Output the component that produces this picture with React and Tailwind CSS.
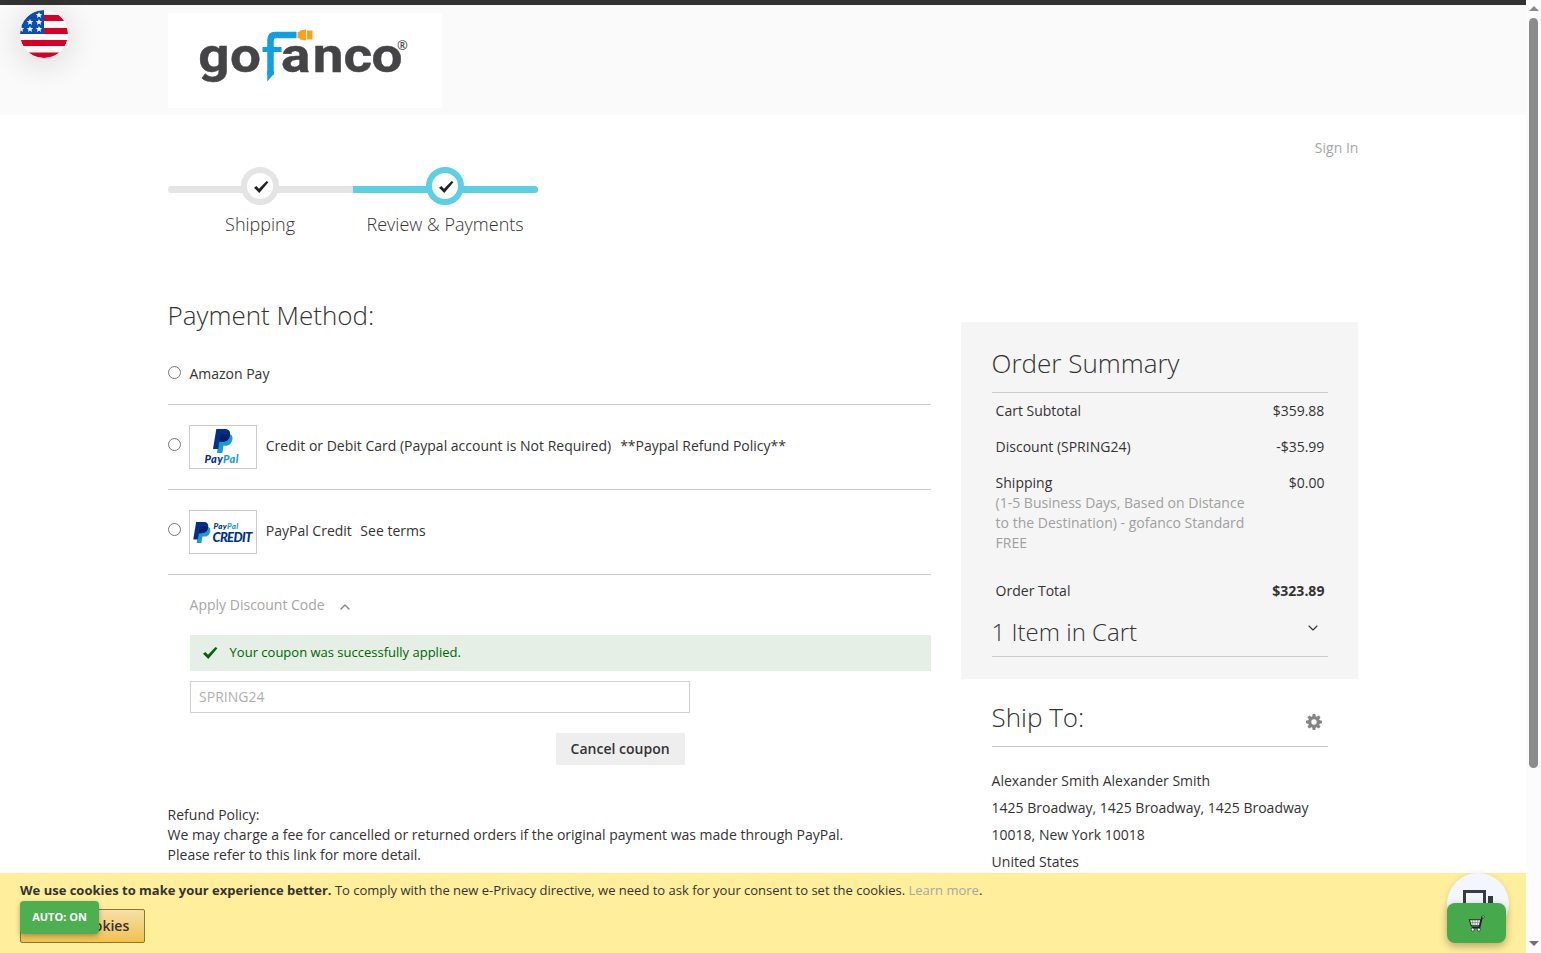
import { ChevronDown, ChevronUp } from "lucide-react";

const paymentRow = "flex border-b border-[#ccc]";

const totals = [
  { label: "Cart Subtotal", value: "$359.88" },
  { label: "Discount (SPRING24)", value: "-$35.99" },
];

const address = [
  "Alexander Smith Alexander Smith",
  "1425 Broadway, 1425 Broadway, 1425 Broadway",
  "10018, New York 10018",
  "United States",
];

function Flag() {
  return (
    <svg
      viewBox="0 0 48 48"
      className="absolute left-5 top-[10px] h-12 w-12 rounded-full shadow-[0_4px_28px_6px_rgba(0,0,0,0.1)]"
    >
      <defs>
        <clipPath id="round">
          <circle cx="24" cy="24" r="24" />
        </clipPath>
      </defs>
      <g clipPath="url(#round)">
        <rect width="48" height="48" fill="#fafafa" />
        <path
          d="M24 5h24v6H24zM24 18h24v6H24zM0 30h48v6H0zM0 42.500h48V48H0z"
          fill="#d80027"
        />
        <path d="M0 0h24v24H0z" fill="#0a4fb0" />
        <g fill="#fff">
          {[
            [19, 5],
            [10, 12],
            [19, 12],
            [10, 19],
            [19, 19],
            [1, 19],
          ].map(([x, y]) => (
            <path
              key={`${x}-${y}`}
              transform={`translate(${x} ${y})`}
              d="M0-3l.9 2.100 2.300.05-1.800 1.500.75 2.250L0 1.600l-2.150 1.300.75-2.250L-3.200-.85l2.300-.05z"
            />
          ))}
        </g>
      </g>
    </svg>
  );
}

function Logo() {
  return (
    <svg
      viewBox="0 0 274 95"
      className="ml-[168px] mt-2 h-[95px] w-[274px] bg-white"
    >
      <text
        transform="scale(1.12 1)"
        y="59"
        x="27 55.400 86 101 129.200 156.600 181.700"
        fill="#444446"
        stroke="#444446"
        strokeWidth=".4"
        className="font-['Roboto'] text-[49px] font-bold"
      >
        go
        <tspan fill="none" stroke="none">
          f
        </tspan>
        anco
      </text>
      {/* hose with the plug on its end */}
      <path
        d="M102.500 62V27q0-5 5-5h21"
        fill="none"
        stroke="#109fe0"
        strokeWidth="6.500"
      />
      <path d="M94.500 34h19v5h-19zM99.250 58h6.500v3l-6.500 7.500z" fill="#109fe0" />
      <path
        d="M129.500 19l2.500-.5v-1l6-1v11l-6-1v-1l-2.500-.5zM139 17.500h5.500v9H139z"
        fill="#f9a11b"
      />
      <text x="229" y="37" fill="#444446" className="font-['Open_Sans'] text-[13px] font-semibold">
        ®
      </text>
    </svg>
  );
}

function Check({ className }) {
  return (
    <svg viewBox="0 0 16 14" className={className}>
      <path
        d="M1 7.800L3.400 6 6 8.800 13.600 1 15.400 2.200 6.300 13z"
        fill="currentColor"
      />
    </svg>
  );
}

function PayPalMark({ className }) {
  return (
    <svg viewBox="0 0 20 24" className={className}>
      <path
        d="M6.500 5h9.500c3 .5 4 3 3.300 6-1 4.200-3.700 5.700-7.300 5.700h-1.500L9.300 24H4z"
        fill="#179bd7"
      />
      <path
        d="M3.300 0h8.500c4 0 6 2.300 5.200 6.300-.8 4.500-3.700 6.500-8 6.500H6.500L5.200 20H0z"
        fill="#003087"
      />
      <path
        d="M7.500 5h6.800q2 .2 2.700 1.300c-.8 4.500-3.700 6.500-8 6.500H6.500z"
        fill="#001f6b"
      />
    </svg>
  );
}

function Radio({ className = "" }) {
  return (
    <input
      type="radio"
      name="payment"
      className={`m-0 h-[13px] w-[13px] shrink-0 ${className}`}
    />
  );
}

function Step({ label, active, first }) {
  return (
    <li className="w-[185px] text-center">
      <div className="grid h-[38px] items-center">
        <div
          className={`col-start-1 row-start-1 mt-[6px] h-[7px] ${
            active ? "bg-[#5bcfe3]" : "bg-[#e4e4e4]"
          } ${first ? "rounded-l-md" : "rounded-r-md"}`}
        />
        <div
          className={`z-10 col-start-1 row-start-1 ml-[73px] flex h-[38px] w-[38px] items-center justify-center rounded-full border-[6px] bg-white ${
            active ? "border-[#5bcfe3]" : "border-[#e4e4e4]"
          }`}
        >
          <Check className="ml-[2px] mt-px h-[14px] w-[16px] shrink-0 text-[#222]" />
        </div>
      </div>
      <div className="mt-[7px] text-[18px] font-light leading-[25px]">
        {label}
      </div>
    </li>
  );
}

function Payments() {
  return (
    <section className="w-[763.4px]">
      <h1 className="mt-[60px] text-[26px] font-light leading-[36px]">
        Payment Method:
      </h1>
      <div className={`mt-[31px] h-[41px] ${paymentRow}`}>
        <Radio className="mt-[2px]" />
        <span className="ml-[8.8px]">Amazon Pay</span>
      </div>
      <div className={`h-[85px] pt-5 ${paymentRow}`}>
        <Radio className="mt-[13px]" />
        <div className="ml-2 flex h-11 w-[68px] flex-col items-center border border-[#ccc]">
          <PayPalMark className="mt-[3px] h-[24px] w-[20px]" />
          <div className="mr-[2px] font-['Lato'] text-[11px] font-black italic leading-[12px] tracking-[0.4px] text-[#003087]">
            Pay<span className="text-[#179bd7]">Pal</span>
          </div>
        </div>
        <span className="ml-[9.2px] mt-[11px]">
          Credit or Debit Card (Paypal account is Not Required)
        </span>
        <span className="ml-[9px] mt-[11px]">**Paypal Refund Policy**</span>
      </div>
      <div className={`h-[85px] pt-5 ${paymentRow}`}>
        <Radio className="mt-[13px]" />
        <div className="ml-2 flex h-11 w-[68px] items-center border border-[#ccc] pl-[3px]">
          <PayPalMark className="h-[21px] w-[18px] shrink-0" />
          <div className="ml-[2px] font-['Lato'] font-black italic text-[#003087]">
            <div className="pl-px text-[8px] leading-[9px] tracking-[0.3px]">
              Pay<span className="text-[#179bd7]">Pal</span>
            </div>
            <div className="text-[13px] leading-[12px] tracking-[-0.7px]">
              CREDIT
            </div>
          </div>
        </div>
        <span className="ml-[9.2px] mt-[11px]">PayPal Credit</span>
        <span className="ml-[8.500px] mt-[11px]">See terms</span>
      </div>

      <div className="ml-[22px] mt-5">
        <div className="flex items-center text-[#a6a6a6]">
          Apply Discount Code
          <ChevronUp className="ml-3 mt-1 h-4 w-4 text-[#858585]" />
        </div>
        <div className="mt-5 flex h-9 items-center bg-[#e5efe5] pl-3 text-[13px] text-[#006400]">
          <Check className="h-[14px] w-[16px]" />
          <span className="mb-[2px] ml-[12px]">
            Your coupon was successfully applied.
          </span>
        </div>
        <input
          readOnly
          value="SPRING24"
          className="mt-[10px] block h-8 w-[500px] border border-[#d2d2d2] px-[8.500px] pb-[2px] text-[#b0b0b0] outline-none"
        />
        <button className="ml-[366px] mt-5 block h-8 w-[129px] bg-[#eee] font-semibold">
          Cancel coupon
        </button>
      </div>

      <div className="mt-10">
        <p>Refund Policy:</p>
        <p>
          We may charge a fee for cancelled or returned orders if the original
          payment was made through PayPal.
        </p>
        <p>Please refer to this link for more detail.</p>
      </div>
    </section>
  );
}

function Sidebar() {
  return (
    <aside className="mt-[85px] w-[397.4px]">
      <div className="h-[357px] bg-[#f5f5f5] pl-[30.6px] pr-[30px] pt-[23px]">
        <h2 className="h-[48px] border-b border-[#ccc] text-[26px] font-light leading-[36px]">
          Order Summary
        </h2>
        <div className="px-1 pt-2">
          {totals.map((row) => (
            <div key={row.label} className="mb-4 flex justify-between">
              <span>{row.label}</span>
              <span>{row.value}</span>
            </div>
          ))}
          <div className="flex justify-between">
            <div>
              <div>Shipping</div>
              <div className="w-[255px] text-[#a0a0a0]">
                (1-5 Business Days, Based on Distance to the Destination) -
                gofanco Standard FREE
              </div>
            </div>
            <span>$0.00</span>
          </div>
          <div className="mt-7 flex justify-between">
            <span>Order Total</span>
            <span className="font-bold">$323.89</span>
          </div>
        </div>
        <div className="mt-[14px] flex h-[42px] justify-between border-b border-[#ccc]">
          <span className="text-[24px] font-light leading-[34px]">
            1 Item in Cart
          </span>
          <ChevronDown
            className="mr-[7px] mt-[5px] h-4 w-4"
            strokeWidth={1.7}
          />
        </div>
      </div>
      <div className="pl-[30.6px] pr-[30px] pt-5">
        <div className="flex h-[48px] justify-between border-b border-[#ccc]">
          <h2 className="text-[26px] font-light leading-[36px]">Ship To:</h2>
          <svg viewBox="-8 -8 16 16" className="mr-[6px] mt-[15px] h-4 w-4">
            <g fill="#858585">
              {[0, 45, 90, 135].map((angle) => (
                <path
                  key={angle}
                  transform={`rotate(${angle})`}
                  d="M-1.300-8h2.600l.6 3v10l-.6 3h-2.600l-.6-3V-5z"
                />
              ))}
              <circle r="5.800" />
            </g>
            <circle r="2.700" fill="#fff" />
          </svg>
        </div>
        <div className="mt-5 leading-[27px]">
          {address.map((line) => (
            <div key={line}>{line}</div>
          ))}
        </div>
      </div>
    </aside>
  );
}

function CookieBar() {
  return (
    <div className="absolute bottom-0 left-0 h-20 w-[1526px] bg-[#ffee9c] px-5 pt-2 text-[13px] leading-[19px]">
      <p>
        <b>We use cookies to make your experience better.</b> To comply with the
        new e-Privacy directive, we need to ask for your consent to set the
        cookies. <span className="text-[#a6a6a6]">Learn more</span>.
      </p>
      <button className="mt-[9px] block h-[34px] w-[125px] rounded-[2px] border border-[#8b7635] bg-gradient-to-b from-[#f7dfa5] to-[#f0c14b] pb-[2px] text-[14px] font-semibold">
        Allow Cookies
      </button>
      <div className="absolute left-5 top-7 flex h-[33px] w-[79px] items-center justify-center rounded bg-[#4caf50] pb-[2px] text-[11px] font-bold text-white shadow-[0_2px_5px_rgba(0,0,0,0.3)]">
        AUTO: ON
      </div>
      <div className="absolute left-[1447px] top-0 h-[62px] w-[62px] rounded-full bg-[#f3f6fc] shadow-[0_1px_6px_rgba(0,0,0,0.12)]">
        <svg viewBox="0 0 62 62" className="h-full w-full">
          <path
            d="M17.500 36V18.500h20V36"
            fill="none"
            stroke="#373b46"
            strokeWidth="3"
          />
          <path d="M41 23h5v14h-5z" fill="#373b46" />
        </svg>
      </div>
      <div className="absolute left-[1447px] top-[30px] flex h-10 w-[59px] items-center justify-center rounded-lg bg-[#46a94b] shadow-[0_3px_8px_rgba(0,0,0,0.3)]">
        <svg viewBox="0 0 18 18" className="h-[17px] w-[17px]">
          <path
            d="M1.500 5h12l-1.300 6.500H3.500z"
            fill="#f2f2f2"
            stroke="#222"
            strokeWidth="1.100"
          />
          <path
            d="M4.500 5l.9 6.500M7.500 5v6.500M10.500 5l-.6 6.500M2 8h11"
            stroke="#666"
            strokeWidth=".6"
          />
          <path
            d="M17 2h-2l-2.700 11.500H4"
            fill="none"
            stroke="#222"
            strokeWidth="1.500"
          />
          <g fill="#fff" stroke="#222" strokeWidth=".8">
            <circle cx="5" cy="15.500" r="1.700" />
            <circle cx="11.500" cy="15.500" r="1.700" />
            <circle cx="16" cy="2" r="1.200" />
          </g>
        </svg>
      </div>
    </div>
  );
}

export default function App() {
  return (
    <div className="relative flex h-[953px] w-[1541px] overflow-hidden bg-white font-['Open_Sans',sans-serif] text-[14px] leading-5 text-[#333]">
      <div className="w-[1526px]">
        <header className="h-[115px] border-t-[5px] border-[#333] bg-[#fafafa]">
          <Flag />
          <Logo />
        </header>
        <main className="ml-[167.6px] w-[1190.8px]">
          <div className="pt-[23px] text-right text-[#a6a6a6]">Sign In</div>
          <ul className="mt-[9px] flex">
            <Step label="Shipping" first />
            <Step label="Review & Payments" active />
          </ul>
          <div className="flex justify-between">
            <Payments />
            <Sidebar />
          </div>
        </main>
      </div>
      <div className="flex w-[15px] flex-col items-center bg-[#fcfcfc]">
        <div className="mt-[6px] border-x-[5px] border-b-[5px] border-x-transparent border-b-[#8b8b8b]" />
        <div className="mt-[7px] h-[750px] w-[9px] rounded-full bg-[#8b8b8b]" />
        <div className="mb-[7px] mt-auto border-x-[5px] border-t-[5px] border-x-transparent border-t-[#707070]" />
      </div>
      <CookieBar />
    </div>
  );
}
